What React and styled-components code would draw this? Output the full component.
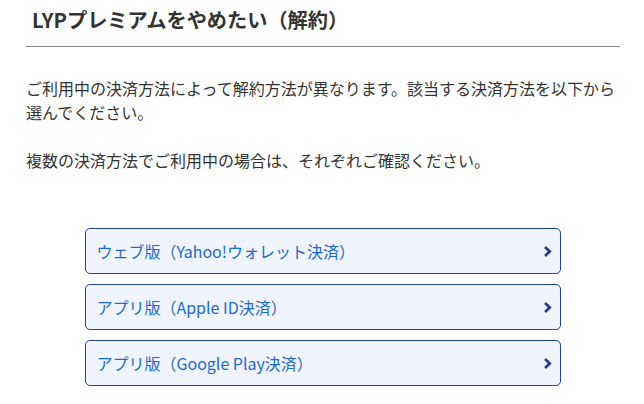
import React from 'react';
import styled, { createGlobalStyle } from 'styled-components';

const GlobalStyle = createGlobalStyle`
  body {
    margin: 0;
    background: #fff;
    font-family: 'Noto Sans CJK JP', 'Noto Sans', sans-serif;
    color: #333;
  }
`;

const Page = styled.div`
  padding: 0 24px 0 26px;
`;

const Title = styled.h1`
  margin: 0;
  padding: 6px 0 12px 6px;
  font-size: 20.2px;
  line-height: 28px;
  font-weight: 700;
  color: #333;
  border-bottom: 1px solid #888;
`;

const Body = styled.div`
  padding-top: 29px;
`;

const Paragraph = styled.p`
  margin: 0 0 24px;
  font-size: 16px;
  line-height: 24px;
`;

const Choices = styled.ul`
  list-style: none;
  margin: 56px auto 0;
  padding: 0;
  width: 80%;
  display: flex;
  flex-direction: column;
  gap: 10px;
`;

const Choice = styled.a`
  display: flex;
  align-items: center;
  justify-content: space-between;
  height: 46px;
  box-sizing: border-box;
  padding: 0 8px 0 10px;
  background: #eff4fe;
  border: 1px solid #23409a;
  border-radius: 5px;
  color: #1e6acb;
  font-size: 16px;
  text-decoration: none;
`;

const Chevron = () => (
  <svg width="9" height="13" viewBox="0 0 9 13">
    <path d="M2 2 L6.8 6.5 L2 11" fill="none" stroke="#1d3a8a" strokeWidth="2.6" />
  </svg>
);

const items = [
  'ウェブ版（Yahoo!ウォレット決済）',
  'アプリ版（Apple ID決済）',
  'アプリ版（Google Play決済）',
];

export default function App() {
  return (
    <Page>
      <GlobalStyle />
      <Title>LYPプレミアムをやめたい（解約）</Title>
      <Body>
        <Paragraph>
          ご利用中の決済方法によって解約方法が異なります。該当する決済方法を以下から選んでください。
        </Paragraph>
        <Paragraph>複数の決済方法でご利用中の場合は、それぞれご確認ください。</Paragraph>
      </Body>
      <Choices>
        {items.map(label => (
          <li key={label}>
            <Choice href="#">
              <span>{label}</span>
              <Chevron />
            </Choice>
          </li>
        ))}
      </Choices>
    </Page>
  );
}
